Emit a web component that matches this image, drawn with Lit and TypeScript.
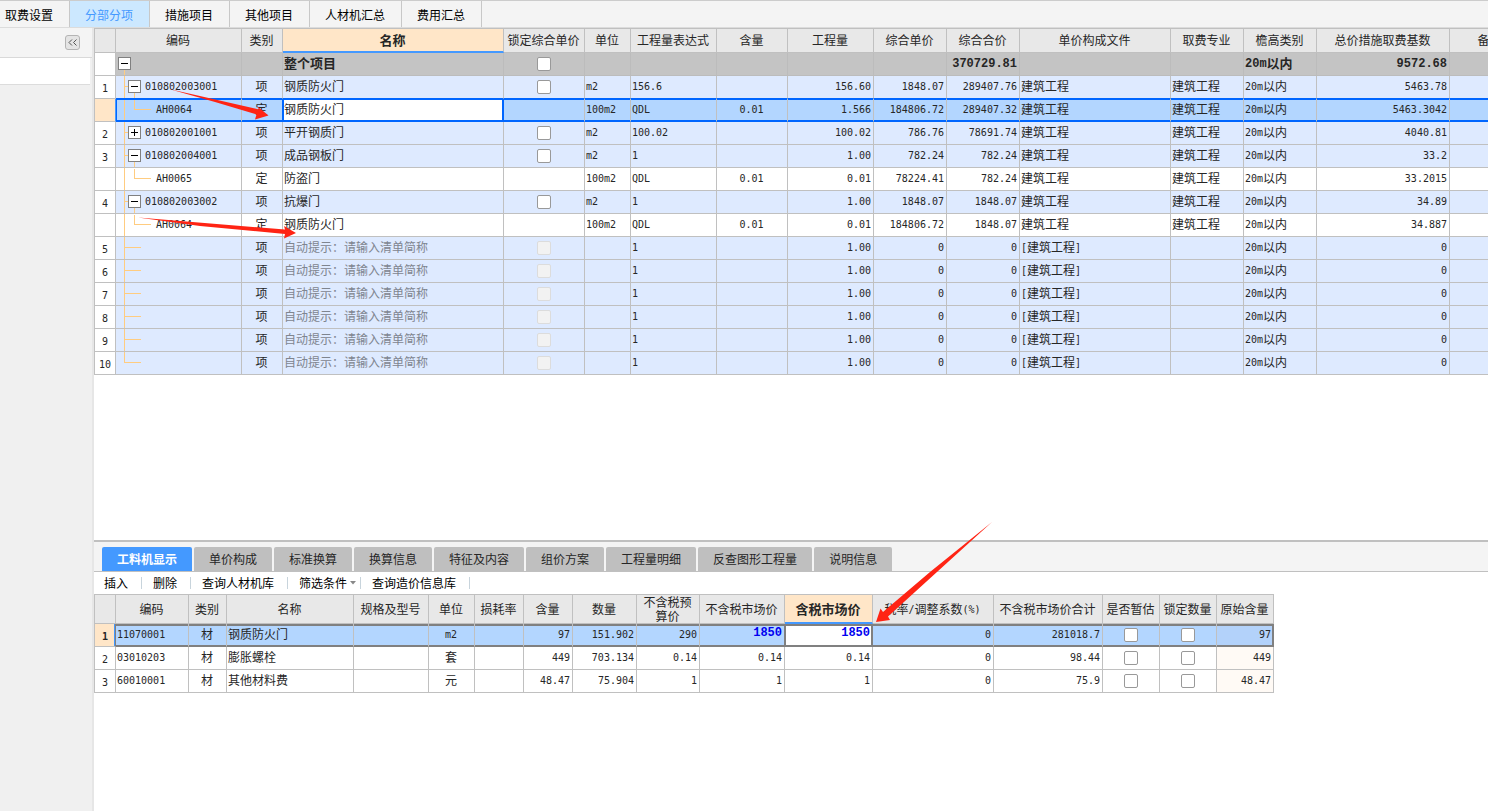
import { LitElement, html, css } from "lit";
import { customElement } from "lit/decorators.js";

interface Row {
  no: string; kind: "total" | "item" | "sub" | "blank"; sel?: boolean; tree?: string;
  code?: string; cat?: string; name?: string; lock?: boolean; unit?: string; expr?: string;
  rate?: string; qty?: string; price?: string; sum?: string; file?: string; major?: string; base?: string;
}

const J = "建筑工程";
const rows: Row[] = [
  { no: "", kind: "total", tree: "minus", name: "整个项目", lock: true, sum: "370729.81", base: "9572.68" },
  { no: "1", kind: "item", tree: "minus", code: "010802003001", cat: "项", name: "钢质防火门", lock: true, unit: "m2", expr: "156.6", qty: "156.60", price: "1848.07", sum: "289407.76", file: J, major: J, base: "5463.78" },
  { no: "", kind: "sub", sel: true, code: "AH0064", cat: "定", name: "钢质防火门", unit: "100m2", expr: "QDL", rate: "0.01", qty: "1.566", price: "184806.72", sum: "289407.32", file: J, major: J, base: "5463.3042" },
  { no: "2", kind: "item", tree: "plus", code: "010802001001", cat: "项", name: "平开钢质门", lock: true, unit: "m2", expr: "100.02", qty: "100.02", price: "786.76", sum: "78691.74", file: J, major: J, base: "4040.81" },
  { no: "3", kind: "item", tree: "minus", code: "010802004001", cat: "项", name: "成品钢板门", lock: true, unit: "m2", expr: "1", qty: "1.00", price: "782.24", sum: "782.24", file: J, major: J, base: "33.2" },
  { no: "", kind: "sub", code: "AH0065", cat: "定", name: "防盗门", unit: "100m2", expr: "QDL", rate: "0.01", qty: "0.01", price: "78224.41", sum: "782.24", file: J, major: J, base: "33.2015" },
  { no: "4", kind: "item", tree: "minus", code: "010802003002", cat: "项", name: "抗爆门", lock: true, unit: "m2", expr: "1", qty: "1.00", price: "1848.07", sum: "1848.07", file: J, major: J, base: "34.89" },
  { no: "", kind: "sub", code: "AH0064", cat: "定", name: "钢质防火门", unit: "100m2", expr: "QDL", rate: "0.01", qty: "0.01", price: "184806.72", sum: "1848.07", file: J, major: J, base: "34.887" },
  ...["5", "6", "7", "8", "9", "10"].map((no): Row => ({ no, kind: "blank", cat: "项", name: "自动提示：请输入清单简称", lock: true, expr: "1", qty: "1.00", price: "0", sum: "0", file: "[建筑工程]", base: "0" })),
];

const mainCols: [string, number][] = [
  ["", 21], ["编码", 126], ["类别", 41], ["名称", 221], ["锁定综合单价", 81], ["单位", 46], ["工程量表达式", 86], ["含量", 71],
  ["工程量", 86], ["综合单价", 73], ["综合合价", 73], ["单价构成文件", 151], ["取费专业", 73], ["檐高类别", 73], ["总价措施取费基数", 133], ["备注", 81],
];
const detailCols: [string, number][] = [
  ["", 21], ["编码", 73], ["类别", 38], ["名称", 127], ["规格及型号", 75], ["单位", 46], ["损耗率", 49], ["含量", 49], ["数量", 64],
  ["不含税预算价", 63], ["不含税市场价", 85], ["含税市场价", 88], ["税率/调整系数(%)", 121], ["不含税市场价合计", 109], ["是否暂估", 57], ["锁定数量", 57], ["原始含量", 57],
];
const details = [
  ["11070001", "材", "钢质防火门", "", "m2", "", "97", "151.902", "290", "1850", "1850", "0", "281018.7", "97"],
  ["03010203", "材", "膨胀螺栓", "", "套", "", "449", "703.134", "0.14", "0.14", "0.14", "0", "98.44", "449"],
  ["60010001", "材", "其他材料费", "", "元", "", "48.47", "75.904", "1", "1", "1", "0", "75.9", "48.47"],
];

/* Latin runs are set smaller than the ideographs beside them. */
const mixed = (s = "") => s.split(/([\x21-\x7e]+)/).map((p, i) => (i % 2 ? html`<span class="n">${p}</span>` : p));
const cols = (c: [string, number][]) => html`<colgroup>${c.map(([, w]) => html`<col style="width:${w}px">`)}</colgroup>`;
const sumOf = (c: [string, number][]) => c.reduce((a, [, w]) => a + w, 0);

@customElement("app-root")
export class AppRoot extends LitElement {
  static styles = css`
    :host { display: block; position: relative; min-height: 100vh; overflow: hidden; background: #fff; color: #262626;
      font: 12px/16px "Noto Sans CJK SC", sans-serif; }
    * { box-sizing: border-box; }
    button { font: inherit; color: inherit; border: 0; background: none; padding: 0; margin: 0; }
    .page { display: flex; flex-direction: column; min-height: 100vh; }
    .topnav { display: flex; height: 28px; background: #f4f4f4; border-top: 1px solid #ccc; border-bottom: 1px solid #dcdcdc; color: #000; }
    .topnav button { padding: 2px 16px 0 15px; border-right: 1px solid #c8c8c8; }
    .topnav button:first-child { padding-left: 5px; }
    .topnav .on { background: #cce8ff; color: #4499ff; }
    .body { display: flex; flex: 1; min-height: 0; }
    .side { flex: none; width: 94px; background: #f0f0f0; border-right: 2px solid #e6e6e6; }
    .sidehead { height: 30px; display: flex; justify-content: flex-end; padding: 7px 12px 0 0; background: #f4f4f4; border-bottom: 1px solid #d9d9d9; }
    .fold { width: 15px; height: 15px; border: 1px solid #b4b4b4; border-radius: 3px; background: #e4e4e4; display: grid; place-items: center; }
    .sideitem { height: 27px; margin-right: 2px; background: #fff; border-bottom: 1px solid #dcdcdc; }
    .work { flex: 1; min-width: 0; display: flex; flex-direction: column; }
    .upper { height: 512px; overflow: hidden; }
    table { table-layout: fixed; border-spacing: 0; border-left: 1px solid #c0c0c0; border-top: 1px solid #c0c0c0; }
    th, td { height: 23px; border-right: 1px solid #c0c0c0; border-bottom: 1px solid #c0c0c0; white-space: nowrap; line-height: 16px; }
    td { padding: 0 2px 3px 1px; text-align: left; }
    th { font-weight: 400; text-align: center; background: #e8e8e8; height: 24px; padding: 0 4px 1px 3px; }
    th.on { background: #ffe6c8; font-size: 13px; font-weight: 700; border-bottom: 2px solid #4499ff; }
    .n { font-family: "DejaVu Sans Mono", "Noto Sans CJK SC", monospace; font-size: 10px; line-height: 12px; vertical-align: 1px; }
    td.c { text-align: center; }
    td.r { text-align: right; }
    td.no { text-align: center; padding: 0; }
    .no .n { vertical-align: baseline; }
    td.check { padding: 0; }
    input[type="checkbox"] { appearance: none; display: block; width: 14px; height: 14px; margin: 0 auto; background: #fff; border: 1px solid #999; border-radius: 2px; }
    input[type="checkbox"]:disabled { background: #f2f2f2; border-color: #dcdcdc; }
    .item td, .blank td { background: #deeaff; }
    .total td { background: #c4c4c4; border-color: #bcbcbc; font-weight: 700; font-size: 13px; }
    .total .n { font-family: "Liberation Mono", monospace; font-size: 12px; }
    tr td.no { background: #fff; border-color: #c0c0c0; }
    .blank .name { color: #7f858f; }
    .presel td:not(.no) { border-bottom-color: #0066ff; }
    .sel td { background: #b3d6ff; border-bottom-color: #0066ff; box-shadow: inset 0 1px #0066ff, inset 0 -1px #0066ff; }
    .sel td.no { background: #ffe6c8; border-right-color: #4499ff; box-shadow: none; }
    .sel td.code { box-shadow: inset 1px 1px #0066ff, inset 0 -1px #0066ff; }
    .sel td.cat { border-right-color: #0066ff; }
    .sel td.name { background: #fff; border-right-color: #0066ff; box-shadow: inset 1px 1px #0066ff, inset -1px -1px #0066ff; }
    td.code { padding: 0; }
    .cell { display: flex; height: 22px; align-items: center; }
    .cell svg { flex: none; display: block; }
    .lower { flex: 1; border-top: 2px solid #c0c0c0; }
    .tabs { display: flex; gap: 2px; padding: 5px 8px 0; background: #f4f4f4; border-bottom: 1px solid #c0c0c0; }
    .tabs button { height: 24px; padding: 0 15px; background: #bfbfbf; border-radius: 2px 2px 0 0; }
    .tabs .on { background: #4499ff; color: #fff; font-weight: 700; }
    .tools { display: flex; align-items: center; height: 22px; color: #000; padding-left: 10px; }
    .tools button { display: flex; align-items: center; gap: 3px; }
    .tools i { width: 1px; height: 12px; background: #c8d4dc; margin: 0 11px 0 13px; }
    .tools .tight { margin-left: 4px; }
    .detail th { height: 29px; line-height: 14px; white-space: normal; padding-bottom: 0; }
    .detail th.on { line-height: 13px; }
    .dsel td { background: #b3d6ff; border-bottom-color: #808080; box-shadow: inset 0 2px #808080, inset 0 -1px #808080; }
    .dsel td.no { background: #ffe6c8; font-weight: 700; border-right-color: #808080; border-bottom-color: #c0c0c0; box-shadow: inset -1px 0 #4499ff; }
    .dsel td.k9 { border-right-color: #808080; }
    .dsel td.k10 { background: #fff; border-right-color: #808080; box-shadow: inset 1px 2px #808080, inset -1px -1px #808080; }
    .dsel td.k9, .dsel td.k10, .dsel .k9 .n, .dsel .k10 .n { color: #0000f0; font: 700 12px/16px "Liberation Mono", monospace; }
    td.orig { background: #fffaf5; }
    .dsel td.orig { background: #b3d2fa; border-right-color: #808080; box-shadow: inset 0 2px #808080, inset -1px -1px #808080; }
    .marks { position: absolute; left: 0; top: 0; pointer-events: none; }
  `;

  branch(r: Row, i: number) {
    const w = r.kind === "item" ? 29 : 40;
    const last = i === rows.length - 1;
    const x = r.kind === "total" ? 2 : 12;
    const trunk = r.kind === "total" ? "M8.5 16V22" : last ? "M8.5 0V11" : r.sel ? "M8.5 1V21" : "M8.5 0V22";
    const twig = r.kind === "item" ? "M8 10.5H12" + (r.tree === "minus" ? "M18.5 17V22" : "")
      : r.kind === "sub" ? "M18.5 1V10.5H35" : r.kind === "blank" ? "M8 10.5H25" : "";
    const sign = `M${x + 3} 10.5H${x + 10}` + (r.tree === "plus" ? `M${x + 6.5} 7V14` : "");
    return html`<svg width=${w} height="22" viewBox="0 0 ${w} 22" fill="none" shape-rendering="crispEdges">
      <path d=${trunk + twig} stroke="#ffcc80" />
      <path d=${r.tree ? `M${x + 0.5} 4.5H${x + 12.5}V16.5H${x + 0.5}Z` : ""} fill="#fff" stroke="#808080" />
      <path d=${r.tree ? sign : ""} stroke="#000" />
    </svg>`;
  }

  render() {
    return html`
      <div class="page">
        <nav class="topnav">
          ${["取费设置", "分部分项", "措施项目", "其他项目", "人材机汇总", "费用汇总"].map((t) => html`<button class=${t === "分部分项" ? "on" : ""}>${t}</button>`)}
        </nav>
        <div class="body">
          <aside class="side">
            <div class="sidehead"><button class="fold" aria-label="收起">
              <svg width="9" height="7" viewBox="0 0 9 7" fill="none" stroke="#555"><path d="M4 .5L1 3.5L4 6.5M8.500 .5L5.500 3.5L8.500 6.5" /></svg>
            </button></div>
            <div class="sideitem"></div>
          </aside>
          <main class="work">
            <section class="upper">
              <table class="main" style="width:${sumOf(mainCols) + 1}px">
                ${cols(mainCols)}
                <thead><tr>${mainCols.map(([t]) => html`<th class=${t === "名称" ? "on" : ""}>${t}</th>`)}</tr></thead>
                <tbody>
                  ${rows.map((r, i) => html`<tr class="${r.kind} ${r.sel ? "sel" : ""} ${rows[i + 1]?.sel ? "presel" : ""}">
                    <td class="no"><span class="n">${r.no}</span></td>
                    <td class="code"><div class="cell">${this.branch(r, i)}<span class="n">${r.code}</span></div></td>
                    <td class="c cat">${r.cat}</td>
                    <td class="name">${r.name}</td>
                    <td class="check">${r.lock ? html`<input type="checkbox" aria-label="锁定综合单价" ?disabled=${r.kind === "blank"}>` : ""}</td>
                    <td>${mixed(r.unit)}</td>
                    <td>${mixed(r.expr)}</td>
                    <td class="c">${mixed(r.rate)}</td>
                    <td class="r">${mixed(r.qty)}</td>
                    <td class="r">${mixed(r.price)}</td>
                    <td class="r">${mixed(r.sum)}</td>
                    <td>${mixed(r.file)}</td>
                    <td>${r.major}</td>
                    <td>${mixed("20m以内")}</td>
                    <td class="r">${mixed(r.base)}</td>
                    <td></td>
                  </tr>`)}
                </tbody>
              </table>
            </section>
            <section class="lower">
              <div class="tabs">
                ${["工料机显示", "单价构成", "标准换算", "换算信息", "特征及内容", "组价方案", "工程量明细", "反查图形工程量", "说明信息"].map((t, i) => html`<button class=${i ? "" : "on"}>${t}</button>`)}
              </div>
              <div class="tools">
                <button>插入</button><i></i><button>删除</button><i></i><button>查询人材机库</button><i></i>
                <button>筛选条件<svg width="6" height="4" viewBox="0 0 6 4"><path d="M0 0H6L3 3.5Z" fill="#888" /></svg></button><i class="tight"></i>
                <button>查询造价信息库</button><i></i>
              </div>
              <table class="detail" style="width:${sumOf(detailCols) + 1}px">
                ${cols(detailCols)}
                <thead><tr>${detailCols.map(([t]) => html`<th class=${t === "含税市场价" ? "on" : ""}>${mixed(t)}</th>`)}</tr></thead>
                <tbody>
                  ${details.map((d, i) => html`<tr class=${i ? "" : "dsel"}>
                    <td class="no"><span class="n">${i + 1}</span></td>
                    ${d.slice(0, 13).map((v, k) => html`<td class="k${k} ${k === 1 || k === 4 ? "c" : k > 5 ? "r" : ""}">${mixed(v)}</td>`)}
                    <td class="check"><input type="checkbox" aria-label="是否暂估"></td>
                    <td class="check"><input type="checkbox" aria-label="锁定数量"></td>
                    <td class="r orig">${mixed(d[13])}</td>
                  </tr>`)}
                </tbody>
              </table>
            </section>
          </main>
        </div>
      </div>
      <svg class="marks" width="1000" height="640" viewBox="0 0 1000 640" fill="#ff2414" aria-hidden="true">
        <path d="M169 89L259 109.500L257 106L268.500 115.500L255 119.500L256.500 114.500L215 102Z" />
        <path d="M138 217.500L285 229.500L284 226L296 233L284 238.500L285 234L200 226Z" />
        <path d="M992 522L888 616.500L890 620L876 622L880.500 608.500L883 612L930 572Z" />
      </svg>`;
  }
}
